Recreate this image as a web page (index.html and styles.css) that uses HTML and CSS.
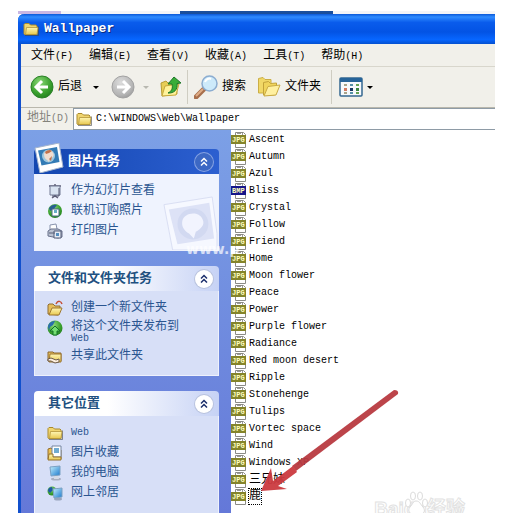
FILE: index.html
```html
<!DOCTYPE html>
<html lang="zh-CN">
<head>
<meta charset="utf-8">
<title>Wallpaper</title>
<link rel="stylesheet" href="styles.css">
</head>
<body>
<svg class="defs" aria-hidden="true">
  <defs>
    <linearGradient id="gold" x1="0" y1="0" x2="0" y2="1"><stop offset="0" stop-color="#fff6b4"/><stop offset="1" stop-color="#e8c850"/></linearGradient>
    <radialGradient id="green" cx=".4" cy=".3" r=".8"><stop offset="0" stop-color="#8bd878"/><stop offset=".6" stop-color="#3ba12e"/><stop offset="1" stop-color="#1c7a1c"/></radialGradient>
    <radialGradient id="grey" cx=".4" cy=".3" r=".8"><stop offset="0" stop-color="#dcdcdc"/><stop offset=".7" stop-color="#b4b4b4"/><stop offset="1" stop-color="#949494"/></radialGradient>
    <linearGradient id="screen" x1="0" y1="0" x2="1" y2="1"><stop offset="0" stop-color="#c6f2ff"/><stop offset="1" stop-color="#1a78cc"/></linearGradient>
    <symbol id="folder" viewBox="0 0 16 16">
      <path d="M2 14.5h13.5V5.5" fill="none" stroke="#444" stroke-opacity=".6"/>
      <path d="M1 13V3.500l1-1h4l1.500 1.500H13l1 1V13.500H1.500z" fill="#f0d570" stroke="#a98a2c"/>
      <path d="M3.500 6.500H15L14 13.500H2.500z" fill="url(#gold)" stroke="#b4963a" stroke-width=".8"/>
    </symbol>
    <symbol id="jpg" viewBox="0 0 16 16">
      <path d="M4.500.5h8l2 2V15.500h-10z" fill="#fff" stroke="#8b8b86"/>
      <path d="M11.500 1v3M6 1.500h4" fill="none" stroke="#999"/>
      <path d="M0 3h15v9H0z" fill="#84842a"/>
      <text x="1" y="10" class="tag">JPG</text>
    </symbol>
    <symbol id="bmp" viewBox="0 0 16 16">
      <path d="M4.500.5h8l2 2V15.500h-10z" fill="#fff" stroke="#8b8b86"/>
      <path d="M11.500 1v3M6 1.500h4" fill="none" stroke="#999"/>
      <path d="M0 3h15v9H0z" fill="#16168a"/>
      <text x="1" y="10" class="tag">BMP</text>
    </symbol>
    <symbol id="chevrons" viewBox="0 0 16 16">
      <path d="M5 7.500l3-3 3 3M5 11.500l3-3 3 3" fill="none" stroke="currentColor" stroke-width="1.500"/>
    </symbol>
    <symbol id="photo" viewBox="0 0 30 30">
      <path d="M1 5L25 0l4 24L6 30z" fill="#fff" stroke="#a3b4cc"/>
      <path d="M4 7.500L23 4l2.500 15L7.500 22.500z" fill="#337bb5"/>
      <circle cx="14.500" cy="13" r="6.500" fill="#9fc8df"/>
      <path d="M10 11c1-4 8-5 9-1 2 3-1 5-3 6l-1 3-2-2c-2-1-3-3-3-6z" fill="#f1ddcf"/>
      <path d="M11 9c2-2 5-3 7-1l-3 2-3 1zM15 16l3-3-1 5z" fill="#c2724c"/>
    </symbol>
  </defs>
</svg>
<div class="backdrop"><span class="tab-left"></span><span class="tab-mid"></span></div>
<main class="window">
  <header class="titlebar">
    <svg class="icon"><use href="#folder"/></svg>
    <h1>Wallpaper</h1>
  </header>
  <nav class="menu">
    <button>文件<span class="en">(F)</span></button>
    <button>编辑<span class="en">(E)</span></button>
    <button>查看<span class="en">(V)</span></button>
    <button>收藏<span class="en">(A)</span></button>
    <button>工具<span class="en">(T)</span></button>
    <button>帮助<span class="en">(H)</span></button>
  </nav>
  <div class="toolbar">
    <button class="tool back">
      <svg class="large" viewBox="0 0 24 24"><circle cx="12" cy="12" r="11" fill="url(#green)" stroke="#2b8128"/><path d="M12 6l-6 6 6 6M7 12h11" fill="none" stroke="#fff" stroke-width="3"/></svg>
      后退<i class="caret"></i>
    </button>
    <button class="tool forward" aria-label="前进" disabled>
      <svg class="large" viewBox="0 0 24 24"><circle cx="12" cy="12" r="11" fill="url(#grey)" stroke="#a2a2a2"/><path d="M12 6l6 6-6 6M17 12H6" fill="none" stroke="#fff" stroke-width="3"/></svg>
      <i class="caret"></i>
    </button>
    <button class="tool up" aria-label="向上">
      <svg class="large" viewBox="0 0 24 24"><path d="M3 21L2 8l5-2 2 2 8-1 1 12z" fill="#e7cd56" stroke="#b79c36"/><path d="M3 21l3-10 14-2-3 11z" fill="#fff29a" stroke="#c6a83b"/><path d="M9 18c4-2 5-5 4-9H9l6-7 7 6-4 .5c1 6-3 10-9 9.500z" fill="#38ad38" stroke="#1d7628"/></svg>
    </button>
    <span class="rule"></span>
    <button class="tool search">
      <svg class="large" viewBox="0 0 24 24"><path d="M2 22l8-8" stroke="#a86f4c" stroke-width="5" stroke-linecap="round"/><path d="M2 21l7-7" stroke="#dfad87" stroke-width="2"/><circle cx="15.500" cy="8.500" r="7.500" fill="#cdeafa" stroke="#8cadd0" stroke-width="1.500"/><path d="M11 7c1-3 4-4 6-3" fill="none" stroke="#fff" stroke-width="2"/></svg>
      搜索
    </button>
    <button class="tool folders">
      <svg class="large" viewBox="0 0 24 24"><path d="M1.500 18V3.500L6 2.500l2 2h6V8L9 18z" fill="#f1d867" stroke="#cbae45"/><path d="M6.500 20V7.500l5-1 2 2 6-.5v4l-2 8z" fill="#f0d45c" stroke="#c3a33a"/><path d="M7 21l4-9.500 12-1.500-4 10z" fill="#fff0a0" stroke="#c9aa43"/></svg>
      文件夹
    </button>
    <span class="rule"></span>
    <button class="tool views" aria-label="查看">
      <svg class="large" viewBox="0 0 24 24"><rect x="1" y="3" width="22" height="18" rx="1" fill="#f6f9fc" stroke="#346790" stroke-width="1.500"/><path d="M1 3h22v4H1z" fill="#276499"/><path d="M5 9h3v2H5zM5 17h3v2H5z" fill="#a7a48b"/><path d="M5 13h3v3H5z" fill="#d27b62"/><path d="M11 9h3v2h-3zM11 17h3v2h-3z" fill="#5590a8"/><path d="M11 13h3v3h-3z" fill="#173763"/><path d="M17 9h3v2h-3zM17 17h3v2h-3z" fill="#65a455"/><path d="M17 13h3v3h-3z" fill="#39843d"/></svg>
      <i class="caret"></i>
    </button>
  </div>
  <div class="address">
    <label for="path">地址<span class="en">(D)</span></label>
    <div class="field">
      <svg class="icon"><use href="#folder"/></svg>
      <input id="path" type="text" value="C:\WINDOWS\Web\Wallpaper">
    </div>
  </div>
  <div class="content">
    <aside class="sidebar">
      <section class="panel primary">
        <h2><svg class="badge"><use href="#photo"/></svg>图片任务<button class="fold" aria-label="折叠"><svg class="icon"><use href="#chevrons"/></svg></button></h2>
        <ul>
          <li><a href="#"><svg class="icon" viewBox="0 0 16 16"><path d="M2 3h12M8 1v2M8 11v3M5 15l3-2 3 2" fill="none" stroke="#606078" stroke-width="1.500"/><path d="M3 3h10v9H3z" fill="#d9e3f1" stroke="#727a94"/><path d="M12 5v8H5" fill="none" stroke="#50556e"/></svg>作为幻灯片查看</a></li>
          <li><a href="#"><svg class="icon" viewBox="0 0 16 16"><circle cx="8" cy="8" r="7" fill="url(#green)"/><path d="M2 5c2-3 5-4 8-3L7 6l-4 2z" fill="#285f91"/><path d="M5 6h7v7H5z" fill="#fff" stroke="#496784"/><path d="M7 7h3v3H7z" fill="#68aec8"/></svg>联机订购照片</a></li>
          <li><a href="#"><svg class="icon" viewBox="0 0 16 16"><path d="M3 7V2l6-1 1 5" fill="#fff" stroke="#8792ad"/><path d="M1 8l3-2h7l4 2v6l-4 1-10-2z" fill="#bbc2d2" stroke="#68708b"/><path d="M2 10h6M7 8h7v7H7z" fill="#e5ebf5" stroke="#555d77"/><path d="M9 10h3v3H9z" fill="#568dbe"/></svg>打印图片</a></li>
        </ul>
        <svg class="ghost" viewBox="0 0 56 56" aria-hidden="true"><path d="M1 9L51 1l5 38v17H10z" fill="#f6f8ff" stroke="#d9def2"/><path d="M6 14l42-7 5 37-38 6z" fill="#dde2f6"/><circle cx="31" cy="29" r="16" fill="#d2d9f1"/><path d="M20 26c2-9 17-11 21-2 3 6-2 10-7 13l-2 7-5-5c-5-3-8-7-7-13z" fill="#f2f4fe"/></svg>
      </section>
      <section class="panel">
        <h2>文件和文件夹任务<button class="fold" aria-label="折叠"><svg class="icon"><use href="#chevrons"/></svg></button></h2>
        <ul>
          <li><a href="#"><svg class="icon" viewBox="0 0 16 16"><path d="M1 14V5l1-1h4l2 2h5v3l-2 6z" fill="#e6be5a" stroke="#8f6c31"/><path d="M2 15l3-7h10l-3 7z" fill="url(#gold)" stroke="#9d7730"/><path d="M9 4c2-4 5-3 6 0" fill="none" stroke="#c54c32" stroke-width="1.500"/></svg>创建一个新文件夹</a></li>
          <li><a href="#"><svg class="icon" viewBox="0 0 16 16"><circle cx="8" cy="8" r="7.500" fill="url(#green)"/><path d="M1 7c0-4 4-6 7-6L6 5 3 7l-1 4z" fill="#2a6eac"/><path d="M8 6l5 5h-3v4H6v-4H3z" fill="#74dd72" stroke="#13722b"/></svg><span class="two-line">将这个文件夹发布到<br><span class="en">Web</span></span></a></li>
          <li><a href="#"><svg class="icon" viewBox="0 0 16 16"><path d="M1 13V4h5l1 1h7v8z" fill="#e2bc5b" stroke="#8b672f"/><path d="M3 6h11v8H2z" fill="url(#gold)" stroke="#9d7730"/><path d="M1 11l3-1 5 2 3-1v3l-4 1-4-2H1z" fill="#fff0df" stroke="#6b5948"/></svg>共享此文件夹</a></li>
        </ul>
      </section>
      <section class="panel places">
        <h2>其它位置<button class="fold" aria-label="折叠"><svg class="icon"><use href="#chevrons"/></svg></button></h2>
        <ul>
          <li><a href="#"><svg class="icon"><use href="#folder"/></svg><span class="en">Web</span></a></li>
          <li><a href="#"><svg class="icon" viewBox="0 0 16 16"><path d="M1 14V4l3-1 2 2h8v9z" fill="#eabf52" stroke="#946f30"/><path d="M5 1h9v11H5z" fill="#fff" stroke="#7585a0"/><path d="M7 3h5v5H7z" fill="#70abd2"/><path d="M1 15l1-6h4v3h8v3z" fill="url(#gold)" stroke="#96732c"/></svg>图片收藏</a></li>
          <li><a href="#"><svg class="icon" viewBox="0 0 16 16"><ellipse cx="9" cy="14" rx="5" ry="1.500" fill="#a8afc2"/><path d="M7 10h4l1 4H7z" fill="#d5dae5"/><path d="M3 2l10-1v9l-9 1z" fill="url(#screen)" stroke="#7aa1c4"/></svg>我的电脑</a></li>
          <li><a href="#"><svg class="icon" viewBox="0 0 16 16"><circle cx="5" cy="6" r="4.500" fill="url(#green)"/><path d="M1 6c0-3 2-4 4-4l1 3-3 3z" fill="#1d5aa4"/><ellipse cx="11" cy="14" rx="4" ry="1.500" fill="#98a4bd"/><path d="M6 4l9-1v9l-8 1z" fill="url(#screen)" stroke="#7ca1c2"/></svg>网上邻居</a></li>
        </ul>
      </section>
    </aside>
    <ul class="files">
      <li><svg class="icon"><use href="#jpg"/></svg><span>Ascent</span></li>
      <li><svg class="icon"><use href="#jpg"/></svg><span>Autumn</span></li>
      <li><svg class="icon"><use href="#jpg"/></svg><span>Azul</span></li>
      <li><svg class="icon"><use href="#bmp"/></svg><span>Bliss</span></li>
      <li><svg class="icon"><use href="#jpg"/></svg><span>Crystal</span></li>
      <li><svg class="icon"><use href="#jpg"/></svg><span>Follow</span></li>
      <li><svg class="icon"><use href="#jpg"/></svg><span>Friend</span></li>
      <li><svg class="icon"><use href="#jpg"/></svg><span>Home</span></li>
      <li><svg class="icon"><use href="#jpg"/></svg><span>Moon flower</span></li>
      <li><svg class="icon"><use href="#jpg"/></svg><span>Peace</span></li>
      <li><svg class="icon"><use href="#jpg"/></svg><span>Power</span></li>
      <li><svg class="icon"><use href="#jpg"/></svg><span>Purple flower</span></li>
      <li><svg class="icon"><use href="#jpg"/></svg><span>Radiance</span></li>
      <li><svg class="icon"><use href="#jpg"/></svg><span>Red moon desert</span></li>
      <li><svg class="icon"><use href="#jpg"/></svg><span>Ripple</span></li>
      <li><svg class="icon"><use href="#jpg"/></svg><span>Stonehenge</span></li>
      <li><svg class="icon"><use href="#jpg"/></svg><span>Tulips</span></li>
      <li><svg class="icon"><use href="#jpg"/></svg><span>Vortec space</span></li>
      <li><svg class="icon"><use href="#jpg"/></svg><span>Wind</span></li>
      <li><svg class="icon"><use href="#jpg"/></svg><span>Windows XP</span></li>
      <li class="zh"><svg class="icon"><use href="#jpg"/></svg><span>三兄妹</span></li>
      <li class="zh"><svg class="icon"><use href="#jpg"/></svg><span class="selected">鹿</span></li>
    </ul>
  </div>
</main>
<svg class="arrow" viewBox="0 0 140 106" aria-hidden="true">
  <path d="M134 1q5 0 4 4L36 82l-4-5z" fill="#b93a41"/>
  <path d="M1 102L11 79l2 13 20-15 4 6-19 14 9 3z" fill="#cc3a40"/>
</svg>
<span class="mark-web">www.p</span>
<div class="mark-baidu">
  <svg viewBox="0 0 24 24"><g fill="#fff" stroke="#dcdcdc"><ellipse cx="4" cy="12" rx="2.500" ry="4"/><ellipse cx="9" cy="5" rx="2.500" ry="4"/><ellipse cx="16" cy="5" rx="2.500" ry="4"/><ellipse cx="21" cy="12" rx="2.500" ry="4"/><path d="M12 10c-3 0-3 3-6 6-3 4 0 7 3 7h7c4 0 6-3 3-7-3-3-3-6-7-6z"/></g></svg>
  <span>Bai</span><span class="du">du</span><span>经验</span>
</div>
</body>
</html>
```
FILE: styles.css
```css
* { box-sizing: border-box; }
html, body { height: 100%; }
body {
  margin: 0;
  padding: 11px 12px 0 18px;
  display: flex;
  flex-direction: column;
  position: relative;
  overflow: hidden;
  background: #fff;
  color: #000;
  font: 12px/16px "Liberation Mono", "Noto Sans CJK SC", monospace;
}
ul, h1, h2 { margin: 0; padding: 0; list-style: none; }
button { border: 0; padding: 0; background: none; color: inherit; font: inherit; }
a { color: inherit; text-decoration: none; }
.en { font-size: 10px; }
.defs { position: absolute; width: 0; height: 0; }
.icon { width: 16px; height: 16px; flex: none; }
.tag { font: bold 7px "Liberation Mono", monospace; fill: #ffffc0; }

.backdrop { display: flex; flex: none; height: 3px; background: #f4f5f8; }
.tab-left { width: 9%; background: #c9b7e3; }
.tab-mid { width: 32%; margin-left: 25%; background: #1a4f9c; }

.window {
  flex: 1;
  min-height: 0;
  display: flex;
  flex-direction: column;
  border-left: 3px solid #1150cd;
  border-top-left-radius: 6px;
  background: #f1f0ea;
}
.titlebar {
  display: flex;
  align-items: center;
  gap: 5px;
  flex: none;
  height: 30px;
  margin-left: -3px;
  padding-left: 5px;
  border-top-left-radius: 6px;
  background: linear-gradient(#0a58d8, #2f8bff 10%, #0a5cec 28%, #0353e4 60%, #0766ff 85%, #0450d0);
  color: #fff;
}
.titlebar h1 {
  font: bold 13px/16px "Liberation Mono", monospace;
  text-shadow: 1px 1px #0a2c80;
}
.menu {
  display: flex;
  flex: none;
  gap: 16px;
  height: 23px;
  padding: 2px 0 0 10px;
  border-bottom: 1px solid #d8d6cc;
}
.toolbar {
  display: flex;
  align-items: center;
  flex: none;
  height: 41px;
  padding-left: 9px;
  border-bottom: 1px solid #b9b7ac;
}
.tool { display: flex; align-items: center; gap: 4px; }
.large { width: 24px; height: 24px; flex: none; }
.caret { border: 3px solid transparent; border-top-color: #000; border-bottom: 0; }
.back .caret { margin-left: 7px; }
.forward { margin-left: 12px; gap: 8px; }
.forward .caret { border-top-color: #b8b8b0; }
.up { margin-left: 10px; }
.rule { width: 1px; height: 34px; margin: 0 6px 0 4px; background: #cfcdc2; }
.folders { margin-left: 11px; }
.folders + .rule { margin: 0 7px 0 10px; }

.address { display: flex; flex: none; height: 22px; }
.address label { width: 52px; padding: 2px 0 0 6px; color: #83827b; }
.field {
  flex: 1;
  display: flex;
  align-items: center;
  gap: 4px;
  padding-left: 2px;
  border: 1px solid #8e9ba6;
  border-right: 0;
  background: #fff;
}
.field input {
  flex: 1;
  min-width: 0;
  padding: 0;
  border: 0;
  outline: 0;
  background: none;
  font: 10px/16px "Liberation Mono", monospace;
}

.content { flex: 1; min-height: 0; display: flex; background: #fff; }
.sidebar {
  flex: none;
  width: 210px;
  padding: 19px 12px 0 13px;
  display: flex;
  flex-direction: column;
  gap: 15px;
  background: linear-gradient(#7ca0e6, #6478d8);
}
.panel { position: relative; flex: none; color: #2a5590; }
.panel h2 {
  display: flex;
  align-items: center;
  justify-content: space-between;
  height: 25px;
  padding: 0 6px 0 14px;
  border-radius: 4px 4px 0 0;
  background: linear-gradient(90deg, #fff 40%, #c6d2f5);
  color: #215080;
  font-size: 13px;
}
.panel ul {
  display: flex;
  flex-direction: column;
  gap: 4px;
  padding: 9px 0 11px 12px;
  border: 1px solid #eef1fc;
  border-top: 0;
  background: #d7dff7;
}
.panel a { display: flex; gap: 8px; }
.panel .two-line { padding-top: 2px; line-height: 11px; }
.fold {
  display: flex;
  padding: 1px;
  border-radius: 50%;
  background: #fff;
  color: #1c2f6c;
  box-shadow: 0 0 0 1px #b9c3de;
}
.primary h2 { padding-left: 34px; background: linear-gradient(90deg, #1346b0, #2c5fd0); color: #fff; }
.primary ul { background: #eff3fe; }
.primary li { position: relative; z-index: 1; }
.primary .fold { background: #3c68c4; color: #fff; box-shadow: 0 0 0 1px #86a2e2; }
.badge { position: absolute; left: 0; top: -6px; width: 30px; height: 30px; }
.ghost { position: absolute; right: 1px; bottom: 1px; width: 56px; height: 54px; }
.places { flex: 1; min-height: 0; display: flex; flex-direction: column; }
.places h2 { flex: none; }
.places ul { flex: 1; min-height: 0; border-bottom: 0; }

.files { flex: 1; padding-top: 1px; }
.files li { display: flex; align-items: center; gap: 2px; height: 17px; font-size: 10px; }
.files .zh { font-size: 12px; }
.selected { outline: 1px dotted #000; line-height: 15px; }

.arrow { position: absolute; left: 260px; top: 389px; width: 140px; height: 106px; opacity: .95; }
.mark-web { position: absolute; left: 186px; top: 241px; color: #fff; opacity: .7; font: bold 14px/16px "DejaVu Sans", sans-serif; }
.mark-baidu {
  position: absolute;
  right: 42px;
  bottom: -8px;
  display: flex;
  color: #fff;
  font: bold 19px/24px "Liberation Sans", "Noto Sans CJK SC", sans-serif;
  -webkit-text-stroke: 1px #e2e2e2;
}
.mark-baidu svg { position: absolute; left: 30px; bottom: 6px; width: 24px; height: 24px; }
```
